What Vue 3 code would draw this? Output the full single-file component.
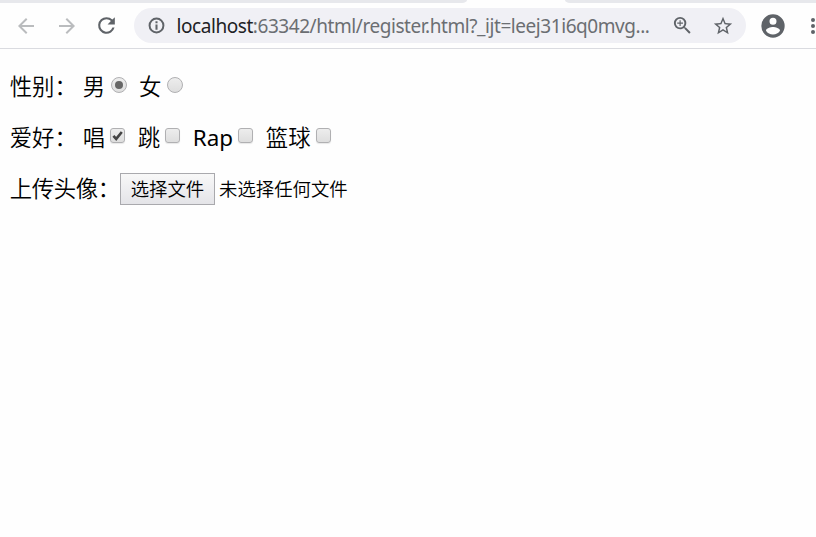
<script setup>
import { ref } from 'vue'

const genders = ref([
  { label: '男', checked: true },
  { label: '女', checked: false },
])
const hobbies = ref([
  { label: '唱', checked: true },
  { label: '跳', checked: false },
  { label: 'Rap', checked: false },
  { label: '篮球', checked: false },
])
</script>

<template>
  <div class="window">
    <div class="tabs"><div class="tab before"></div><div class="tab after"></div></div>
    <header class="toolbar">
      <svg class="icon back" viewBox="0 0 24 24"><path d="M20 11H7.83l5.59-5.59L12 4l-8 8 8 8 1.41-1.41L7.83 13H20z" /></svg>
      <svg class="icon forward" viewBox="0 0 24 24"><path d="M12 4l-1.41 1.41L16.17 11H4v2h12.17l-5.58 5.59L12 20l8-8z" /></svg>
      <svg class="icon reload" viewBox="0 0 24 24"><path d="M17.65 6.35A7.96 7.96 0 0 0 12 4a8 8 0 1 0 7.73 10h-2.08A6 6 0 1 1 12 6c1.66 0 3.14.69 4.22 1.78L13 11h7V4z" /></svg>
      <div class="address">
        <svg class="icon info" viewBox="0 0 24 24"><path d="M10.7 6.7h2.6v2.6h-2.6zm0 4h2.6v6.6h-2.6zM12 2a10 10 0 1 0 0 20 10 10 0 0 0 0-20zm0 17.5a7.5 7.5 0 1 1 0-15 7.5 7.5 0 0 1 0 15z" /></svg>
        <div class="url"><span class="host">localhost</span>:63342/html/register.html?_ijt=leej31i6q0mvg...</div>
        <svg class="icon zoom" viewBox="0 0 24 24"><path d="M15.5 14h-.79l-.28-.27A6.47 6.47 0 0 0 16 9.5 6.5 6.5 0 1 0 9.5 16c1.61 0 3.09-.59 4.23-1.57l.27.28v.79l5 4.99L20.49 19zm-6 0a4.5 4.5 0 1 1 0-9 4.5 4.5 0 0 1 0 9zM12.5 10.1h-2.4v2.4H8.9v-2.4H6.5V8.9h2.4V6.5h1.2v2.4h2.4z" /></svg>
        <svg class="icon star" viewBox="0 0 24 24"><path d="M22 9.24l-7.19-.62L12 2 9.19 8.63 2 9.24l5.46 4.73L5.82 21 12 17.27 18.18 21l-1.63-7.03zM12 15.4l-3.76 2.27 1-4.28-3.32-2.88 4.38-.38L12 6.1l1.71 4.04 4.38.38-3.32 2.88 1 4.28z" /></svg>
      </div>
      <svg class="icon account" viewBox="0 0 24 24"><path d="M12 2a10 10 0 1 0 0 20 10 10 0 0 0 0-20zm0 3a3 3 0 1 1 0 6 3 3 0 0 1 0-6zm0 14.2a7.2 7.2 0 0 1-6-3.22c.03-1.99 4-3.08 6-3.08s5.97 1.09 6 3.08a7.2 7.2 0 0 1-6 3.22z" /></svg>
      <svg class="icon more" viewBox="0 0 24 24"><circle cx="12" cy="6" r="2" /><circle cx="12" cy="12" r="2" /><circle cx="12" cy="18" r="2" /></svg>
    </header>

    <form class="page">
      <div class="row">
        <span class="title">性别：</span>
        <label v-for="g in genders" :key="g.label" class="option radio-option">
          <span>{{ g.label }}</span><i class="radio" :class="{ on: g.checked }"></i>
        </label>
      </div>
      <div class="row">
        <span class="title">爱好：</span>
        <label v-for="h in hobbies" :key="h.label" class="option">
          <span :class="{ latin: h.label === 'Rap' }">{{ h.label }}</span><i class="check"><svg v-if="h.checked" viewBox="0 0 15 15"><path d="M3.4 7.8l2.8 3.1L11.8 4" /></svg></i>
        </label>
      </div>
      <div class="row">
        <span class="upload">上传头像：</span>
        <button type="button" class="file">选择文件</button>
        <span class="status">未选择任何文件</span>
      </div>
    </form>
  </div>
</template>

<style>
body { margin: 0; background: #fefefe; }
</style>

<style scoped>
.window {
  width: 816px;
  height: 537px;
  overflow: hidden;
  background: #fefefe;
  font-family: "Noto Sans", "Noto Sans CJK SC", sans-serif;
}
.tabs { display: flex; justify-content: space-between; height: 3px; }
.tab { background: #e7e8ec; }
.before { width: 467px; border-bottom-right-radius: 5px 3px; }
.after { width: 251px; border-bottom-left-radius: 5px 3px; }
.toolbar {
  display: flex;
  align-items: center;
  box-sizing: border-box;
  height: 46px;
  padding-left: 14px;
  border-bottom: 1px solid #dadbe0;
}
.icon { flex: none; width: 24px; height: 24px; fill: #5f6368; }
.back, .forward { fill: #babcbe; }
.forward { margin-left: 17px; }
.reload { width: 25px; height: 25px; margin-left: 15px; }
.address {
  display: flex;
  flex: none;
  align-items: center;
  box-sizing: border-box;
  width: 612px;
  height: 35px;
  margin-left: 15px;
  padding-left: 13px;
  border-radius: 18px;
  background: #f0f0f5;
}
.info { width: 19px; height: 19px; }
.url {
  flex: none;
  width: 484px;
  margin-left: 10.5px;
  color: #6b6e72;
  font-size: 19px;
  letter-spacing: -0.44px;
  line-height: 30px;
  white-space: nowrap;
}
.host { color: #202124; }
.zoom { width: 23px; height: 23px; margin-left: 10.5px; }
.star { width: 22px; height: 22px; margin-left: 17.5px; }
.account { width: 28px; height: 28px; margin-left: 13px; }
.more { margin-left: 14px; }
.page { padding: 20px 0 0 9.7px; }
.row {
  display: flex;
  align-items: center;
  height: 34px;
  margin-bottom: 17px;
  color: #000;
  font-size: 22.4px;
  font-weight: 350;
  line-height: 34px;
  white-space: nowrap;
}
.title, .upload, .option span { padding-top: 2px; }
.title { width: 73px; }
.upload { width: 110.3px; letter-spacing: -0.4px; }
.option { display: flex; align-items: center; margin-right: 12.5px; }
.radio-option { margin-right: 12px; }
.option .latin { font-weight: 400; letter-spacing: 0.1px; }
.radio, .check {
  box-sizing: border-box;
  width: 16px;
  height: 16px;
  margin-left: 5.9px;
  border: 1px solid #b0b0b2;
  background: linear-gradient(#ededed, #dedede);
}
.radio { display: flex; align-items: center; justify-content: center; margin-bottom: 2px; border-radius: 50%; }
.radio.on::before { content: ""; width: 8px; height: 8px; border-radius: 50%; background: #666; }
.check {
  width: 15px;
  height: 15px;
  margin-left: 5.1px;
  margin-bottom: 3px;
  border-radius: 3px;
  box-shadow: 0 1px 1px #e8e8e8;
}
.check svg { display: block; width: 15px; height: 15px; margin: -1px; }
.check path { fill: none; stroke: #444; stroke-width: 2.6; }
.file {
  box-sizing: border-box;
  width: 95px;
  height: 32px;
  margin-top: 2px;
  padding: 0;
  border: 1px solid #a9a9ad;
  background: linear-gradient(#f8f8f8, #e4e4e8);
  color: #000;
  font: 350 18.4px/28px "Noto Sans", "Noto Sans CJK SC", sans-serif;
}
.status { margin-top: 2px; margin-left: 4px; font-size: 18.4px; }
</style>
